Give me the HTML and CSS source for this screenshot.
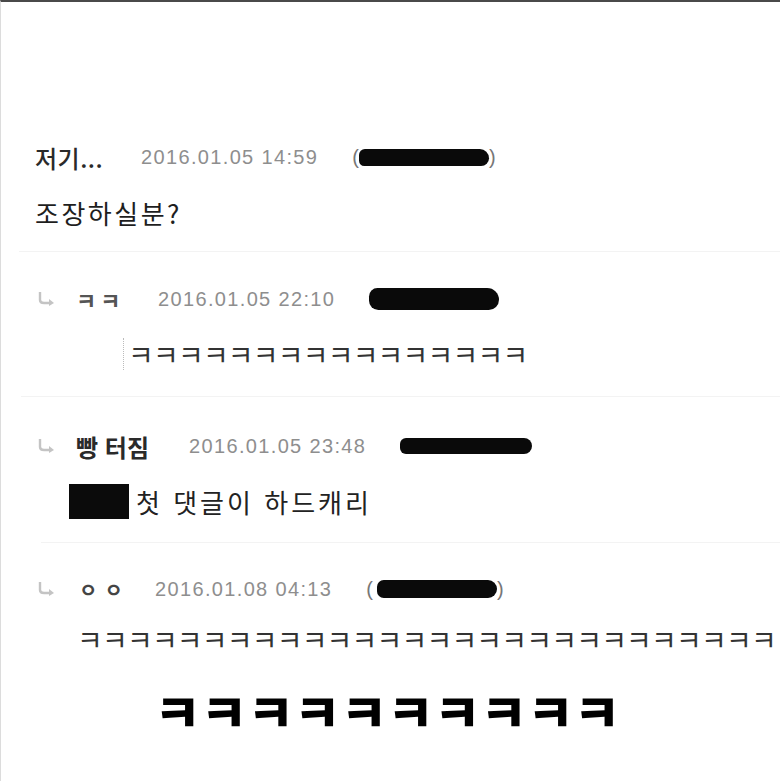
FILE: index.html
```html
<!DOCTYPE html>
<html lang="ko">
<head>
<meta charset="utf-8">
<link rel="stylesheet" href="styles.css">
</head>
<body>
<div class="page">
  <section class="comment top">
    <div class="head">
      <span class="name n1">저기...</span>
      <span class="date">2016.01.05 14:59</span>
      <span class="ip"><span class="paren">(</span><span class="blob b1"></span><span class="paren">)</span></span>
    </div>
    <div class="text">조장하실분?</div>
  </section>

  <section class="comment reply r1">
    <div class="head">
      <svg class="arrow" viewBox="0 0 20 16" width="20" height="16"><path d="M3 1 V9 Q3 12 7 12 H14" fill="none" stroke="#c4c4c4" stroke-width="2.4"/><path d="M12 8 L17 12 L12 15" fill="#c4c4c4"/></svg>
      <span class="name n2">ㅋㅋ</span>
      <span class="date">2016.01.05 22:10</span>
      <span class="ip"><span class="blob b2"></span></span>
    </div>
    <div class="text"><span class="erased"></span><span class="kk">ㅋㅋㅋㅋㅋㅋㅋㅋㅋㅋㅋㅋㅋㅋㅋㅋ</span></div>
  </section>

  <section class="comment reply r2">
    <div class="head">
      <svg class="arrow" viewBox="0 0 20 16" width="20" height="16"><path d="M3 1 V9 Q3 12 7 12 H14" fill="none" stroke="#c4c4c4" stroke-width="2.4"/><path d="M12 8 L17 12 L12 15" fill="#c4c4c4"/></svg>
      <span class="name n3">빵 터짐</span>
      <span class="date">2016.01.05 23:48</span>
      <span class="ip"><span class="blob b3"></span></span>
    </div>
    <div class="text"><span class="mask"></span><span class="msg">첫 댓글이 하드캐리</span></div>
  </section>

  <section class="comment reply r3">
    <div class="head">
      <svg class="arrow" viewBox="0 0 20 16" width="20" height="16"><path d="M3 1 V9 Q3 12 7 12 H14" fill="none" stroke="#c4c4c4" stroke-width="2.4"/><path d="M12 8 L17 12 L12 15" fill="#c4c4c4"/></svg>
      <span class="name n4">ㅇㅇ</span>
      <span class="date">2016.01.08 04:13</span>
      <span class="ip"><span class="paren">(</span><span class="blob b4"></span><span class="paren">)</span></span>
    </div>
    <div class="text long"><span class="kk">ㅋㅋㅋㅋㅋㅋㅋㅋㅋㅋㅋㅋㅋㅋㅋㅋㅋㅋㅋㅋㅋㅋㅋㅋㅋㅋㅋㅋ</span></div>
  </section>

  <div class="caption"><span class="caption-text">ㅋㅋㅋㅋㅋㅋㅋㅋㅋㅋ</span></div>
</div>
</body>
</html>
```

FILE: styles.css
```css
html, body {
  margin: 0;
  padding: 0;
  background: #fff;
}
body {
  font-family: "Noto Sans CJK KR", "Noto Sans", sans-serif;
  color: #1e1e1e;
}
.page {
  width: 780px;
  height: 781px;
  box-sizing: border-box;
  border-top: 2px solid #4a4a4a;
  border-left: 1px solid #dcdcdc;
  overflow: hidden;
  padding-top: 140px;
}
.comment {
  border-bottom: 1px solid #f3f3f3;
}
.comment.top {
  margin-left: 18px;
  padding-left: 16px;
  padding-bottom: 19px;
}
.head {
  display: flex;
  align-items: center;
  height: 30px;
  white-space: nowrap;
}
.name {
  flex-shrink: 0;
  font-size: 24px;
  font-weight: 700;
  color: #2a2a2a;
}
.n1 { width: 106px; font-weight: 500; letter-spacing: 0.5px; }
.n2 { width: 82px; font-size: 22px; letter-spacing: 4px; color: #555; }
.n3 { width: 113px; }
.n4 { width: 79px; font-size: 20px; letter-spacing: 7px; color: #444; padding-left: 3px; box-sizing: border-box; }
.date {
  font-family: "Liberation Sans", Arial, sans-serif;
  font-size: 20px;
  letter-spacing: 1.35px;
  color: #8e8e8e;
  margin-right: 34px;
}
.ip {
  display: flex;
  align-items: center;
}
.paren {
  font-family: "Liberation Sans", Arial, sans-serif;
  font-size: 20px;
  color: #777;
}
.blob {
  display: inline-block;
  background: #0a0a0a;
}
.b1 { width: 130px; height: 17px; border-radius: 9px 14px 12px 8px; }
.b2 { width: 130px; height: 22px; border-radius: 10px 14px 12px 11px; }
.b3 { width: 132px; height: 16px; border-radius: 6px 8px 8px 6px; }
.b4 { width: 120px; height: 18px; margin-left: 4px; border-radius: 9px 12px 12px 9px; }
.text {
  margin-top: 20px;
  height: 40px;
  display: flex;
  align-items: center;
  white-space: nowrap;
}
.comment.top .text { font-size: 26px; letter-spacing: 2.5px; }
.reply .head { padding-left: 36px; }
.reply .arrow { flex-shrink: 0; margin-right: 19px; }
.reply .text { padding-left: 68px; }
.r1 { margin-left: 20px; padding-top: 32px; padding-bottom: 22px; }
.r1 .head, .r1 .text { margin-left: -20px; }
.r2 { margin-left: 40px; padding-top: 34px; padding-bottom: 21px; }
.r2 .head, .r2 .text { margin-left: -40px; }
.r3 { margin-left: 48px; padding-top: 31px; border-bottom: none; }
.r3 .head, .r3 .text { margin-left: -48px; }
.r3 .text { margin-top: 15px; }
.erased {
  display: inline-block;
  width: 54px;
  height: 32px;
  border-right: 1px dotted #bbb;
  margin-right: 4px;
}
.kk {
  font-size: 28px;
  letter-spacing: -0.8px;
  color: #333;
}
.mask {
  display: inline-block;
  width: 60px;
  height: 35px;
  background: #0b0b0b;
  margin-right: 7px;
}
.msg {
  font-size: 26px;
  letter-spacing: 3px;
  color: #222;
}
.text.long { padding-left: 76px; overflow: hidden; }
.caption {
  margin-top: 21px;
  padding-left: 153px;
  line-height: 60px;
  white-space: nowrap;
}
.caption-text {
  display: inline-block;
  font-size: 51px;
  font-weight: 900;
  letter-spacing: -0.3px;
  color: #000;
}
```
